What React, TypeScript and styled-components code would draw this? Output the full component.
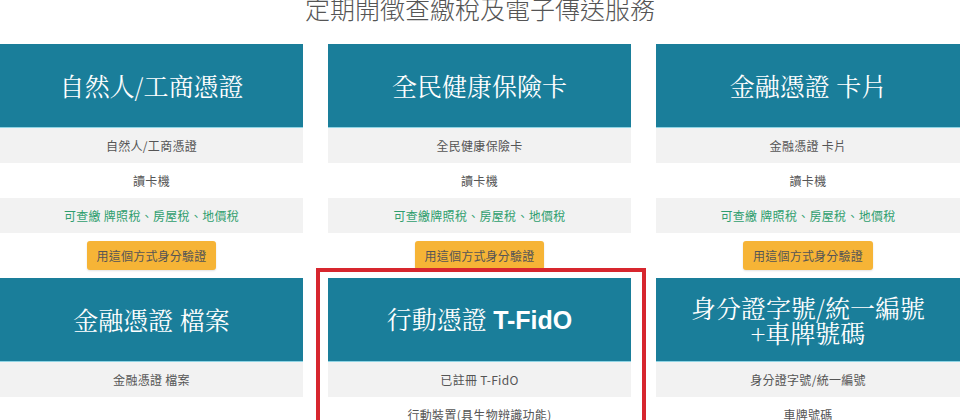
import React from "react";
import styled, { createGlobalStyle } from "styled-components";

const GlobalStyle = createGlobalStyle`
  html, body {
    margin: 0;
    padding: 0;
    background: #ffffff;
    overflow: hidden;
  }
  body {
    font-family: "Noto Sans CJK TC", "Noto Sans", sans-serif;
  }
`;

const Page = styled.div`
  width: 960px;
  height: 420px;
  overflow: hidden;
  background: #fff;
`;

const Title = styled.h2`
  margin: -4px 0 0;
  height: 48px;
  font-size: 25px;
  line-height: 25px;
  font-weight: 300;
  color: #555;
  text-align: center;
  font-family: "Noto Sans CJK TC", sans-serif;
`;

const Grid = styled.div`
  display: grid;
  grid-template-columns: 303px 303px 304px;
  column-gap: 25px;
`;

const Card = styled.div`
  position: relative;
  display: flex;
  flex-direction: column;
`;

const Highlight = styled.div`
  position: absolute;
  top: -10px;
  left: -12px;
  right: -15px;
  bottom: -10px;
  border: 4px solid #d7262e;
  pointer-events: none;
`;

const CardHeader = styled.div`
  box-sizing: border-box;
  height: 84px;
  background: #1a7e9a;
  border-bottom: 1px solid #8fd4e4;
  display: flex;
  align-items: center;
  justify-content: center;
  text-align: center;
  color: #fff;
  font-size: 25px;
  line-height: 25px;
  font-family: "Noto Serif CJK TC", "Noto Sans CJK TC", serif;
  font-weight: 400;
`;

const Latin = styled.span`
  font-family: "Liberation Sans", Arial, sans-serif;
  font-weight: 700;
`;

const Row = styled.div<{ $shade?: boolean; $tone?: "green" | "plain" }>`
  height: 35px;
  display: flex;
  align-items: center;
  justify-content: center;
  background: ${(p) => (p.$shade ? "#f2f2f2" : "#ffffff")};
  color: ${(p) => (p.$tone === "green" ? "#2f9e6e" : "#555555")};
  font-size: 12px;
  letter-spacing: 0.3px;
  font-family: "Noto Sans CJK TC", sans-serif;
`;

const ButtonArea = styled.div`
  padding: 8px 0;
  display: flex;
  justify-content: center;
`;

const Button = styled.button`
  height: 29px;
  padding: 0 10px;
  border: none;
  border-radius: 3px;
  background: #f6b436;
  color: #555;
  font-size: 12px;
  letter-spacing: 0.2px;
  font-family: "Noto Sans CJK TC", sans-serif;
  box-shadow: 0 1px 2px rgba(0, 0, 0, 0.12);
  cursor: pointer;
`;

type RowData = { text: string; green?: boolean };
type CardData = { title: React.ReactNode; rows: RowData[]; highlight?: boolean };

const cards: CardData[] = [
  {
    title: "自然人/工商憑證",
    rows: [
      { text: "自然人/工商憑證" },
      { text: "讀卡機" },
      { text: "可查繳 牌照稅、房屋稅、地價稅", green: true },
    ],
  },
  {
    title: "全民健康保險卡",
    rows: [
      { text: "全民健康保險卡" },
      { text: "讀卡機" },
      { text: "可查繳牌照稅、房屋稅、地價稅", green: true },
    ],
  },
  {
    title: "金融憑證 卡片",
    rows: [
      { text: "金融憑證 卡片" },
      { text: "讀卡機" },
      { text: "可查繳 牌照稅、房屋稅、地價稅", green: true },
    ],
  },
  {
    title: "金融憑證 檔案",
    rows: [
      { text: "金融憑證 檔案" },
      { text: "" },
      { text: "可查繳 牌照稅、房屋稅、地價稅", green: true },
    ],
  },
  {
    title: (
      <>
        行動憑證 <Latin>T-FidO</Latin>
      </>
    ),
    highlight: true,
    rows: [
      { text: "已註冊 T-FidO" },
      { text: "行動裝置(具生物辨識功能)" },
      { text: "可查繳 牌照稅、房屋稅、地價稅", green: true },
    ],
  },
  {
    title: (
      <>
        身分證字號/統一編號
        <br />
        +車牌號碼
      </>
    ),
    rows: [
      { text: "身分證字號/統一編號" },
      { text: "車牌號碼" },
      { text: "可查繳 牌照稅", green: true },
    ],
  },
];

export default function App() {
  return (
    <Page>
      <GlobalStyle />
      <Title>定期開徵查繳稅及電子傳送服務</Title>
      <Grid>
        {cards.map((c, i) => (
          <Card key={i}>
            {c.highlight && <Highlight />}
            <CardHeader>
              <div>{c.title}</div>
            </CardHeader>
            {c.rows.map((r, j) => (
              <Row key={j} $shade={j % 2 === 0} $tone={r.green ? "green" : "plain"}>
                {r.text}
              </Row>
            ))}
            <ButtonArea>
              <Button>用這個方式身分驗證</Button>
            </ButtonArea>
          </Card>
        ))}
      </Grid>
    </Page>
  );
}
